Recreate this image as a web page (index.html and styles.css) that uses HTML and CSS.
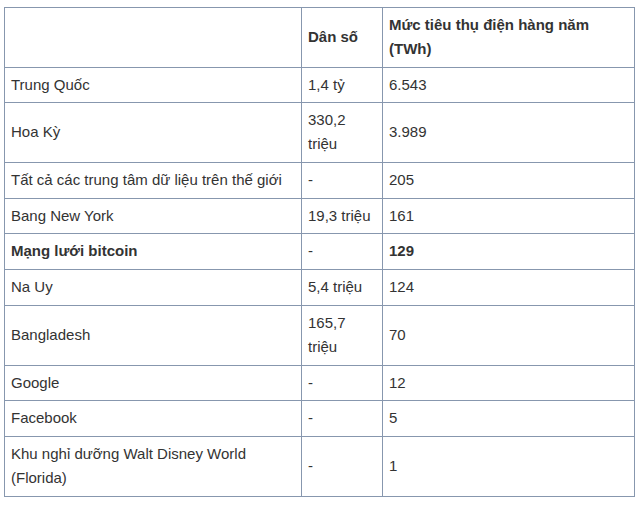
FILE: index.html
```html
<!DOCTYPE html>
<html lang="vi">
<head>
<meta charset="utf-8">
<title>Mức tiêu thụ điện</title>
<link rel="stylesheet" href="styles.css">
</head>
<body>
<table class="data-table">
  <colgroup>
    <col class="col-name">
    <col class="col-pop">
    <col class="col-twh">
  </colgroup>
  <thead>
    <tr>
      <th></th>
      <th>Dân số</th>
      <th>Mức tiêu thụ điện hàng năm (TWh)</th>
    </tr>
  </thead>
  <tbody>
    <tr><td>Trung Quốc</td><td>1,4 tỷ</td><td>6.543</td></tr>
    <tr><td>Hoa Kỳ</td><td>330,2 triệu</td><td>3.989</td></tr>
    <tr><td>Tất cả các trung tâm dữ liệu trên thế giới</td><td>-</td><td>205</td></tr>
    <tr><td>Bang New York</td><td>19,3 triệu</td><td>161</td></tr>
    <tr class="highlight"><td>Mạng lưới bitcoin</td><td>-</td><td>129</td></tr>
    <tr><td>Na Uy</td><td>5,4 triệu</td><td>124</td></tr>
    <tr><td>Bangladesh</td><td>165,7 triệu</td><td>70</td></tr>
    <tr><td>Google</td><td>-</td><td>12</td></tr>
    <tr><td>Facebook</td><td>-</td><td>5</td></tr>
    <tr><td>Khu nghỉ dưỡng Walt Disney World (Florida)</td><td>-</td><td>1</td></tr>
  </tbody>
</table>
</body>
</html>
```
FILE: styles.css
```css
html, body {
  background: #ffffff;
}
body {
  margin: 7px 0 0 4px;
  font-family: "Liberation Sans", Arial, sans-serif;
  font-size: 15px;
  line-height: 24px;
  color: #333333;
}
.data-table {
  border-collapse: collapse;
  width: 630px;
  table-layout: fixed;
}
.col-name { width: 297px; }
.col-pop { width: 81px; }
.col-twh { width: 252px; }
.data-table th,
.data-table td {
  border: 1px solid #8797ae;
  padding: 5px 6px 5.7px 6px;
  vertical-align: middle;
  text-align: left;
}
.data-table th {
  font-weight: bold;
}
.highlight td {
  font-weight: bold;
}
.highlight td:nth-child(2) {
  font-weight: normal;
}
```
